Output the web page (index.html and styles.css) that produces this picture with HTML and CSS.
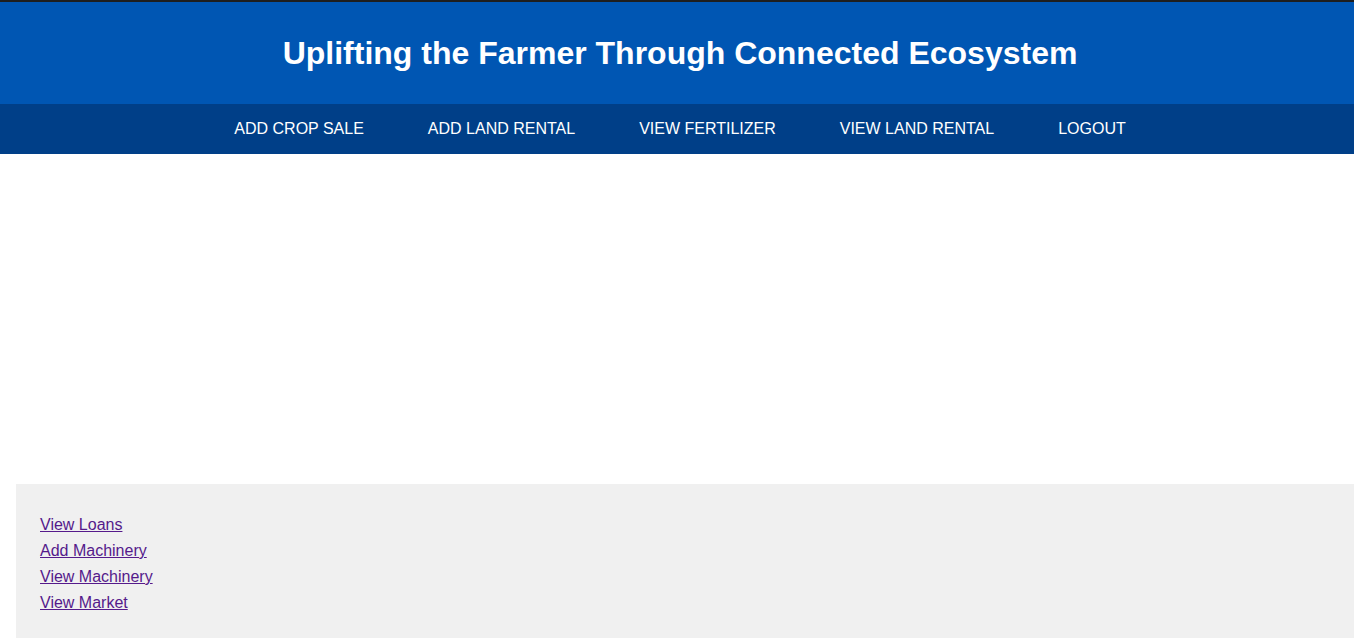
FILE: index.html
```html
<!DOCTYPE html>
<html lang="en">
<head>
<meta charset="utf-8">
<title>Farmer Ecosystem</title>
<link rel="stylesheet" href="styles.css">
</head>
<body>
<header class="site-header">
  <h1 class="site-title">Uplifting the Farmer Through Connected Ecosystem</h1>
</header>
<nav class="main-nav">
  <a href="#" class="nav-link">ADD CROP SALE</a>
  <a href="#" class="nav-link">ADD LAND RENTAL</a>
  <a href="#" class="nav-link">VIEW FERTILIZER</a>
  <a href="#" class="nav-link">VIEW LAND RENTAL</a>
  <a href="#" class="nav-link">LOGOUT</a>
</nav>
<main class="content"></main>
<footer class="footer">
  <a href="#" class="footer-link">View Loans</a>
  <a href="#" class="footer-link">Add Machinery</a>
  <a href="#" class="footer-link">View Machinery</a>
  <a href="#" class="footer-link">View Market</a>
</footer>
</body>
</html>
```
FILE: styles.css
```css
html, body {
  margin: 0;
  padding: 0;
  background: #ffffff;
  font-family: "Liberation Sans", Arial, sans-serif;
  overflow: hidden;
}
.site-header {
  background: #0056b3;
  border-top: 2px solid #1e1e1e;
  height: 102px;
  padding-left: 6px;
  display: flex;
  align-items: center;
  justify-content: center;
}
.site-title {
  margin: 0;
  color: #ffffff;
  font-size: 32px;
  font-weight: bold;
}
.main-nav {
  background: #003f88;
  height: 50px;
  padding-left: 6px;
  display: flex;
  align-items: center;
  justify-content: center;
  gap: 64px;
}
.nav-link {
  color: #ffffff;
  text-decoration: none;
  font-size: 16px;
}
.content {
  height: 330px;
}
.footer {
  margin-left: 16px;
  background: #f0f0f0;
  height: 154px;
  box-sizing: border-box;
  padding: 28px 24px 26px;
  display: flex;
  flex-direction: column;
  align-items: flex-start;
}
.footer-link {
  color: #551a8b;
  font-size: 16px;
  line-height: 26px;
}
```
